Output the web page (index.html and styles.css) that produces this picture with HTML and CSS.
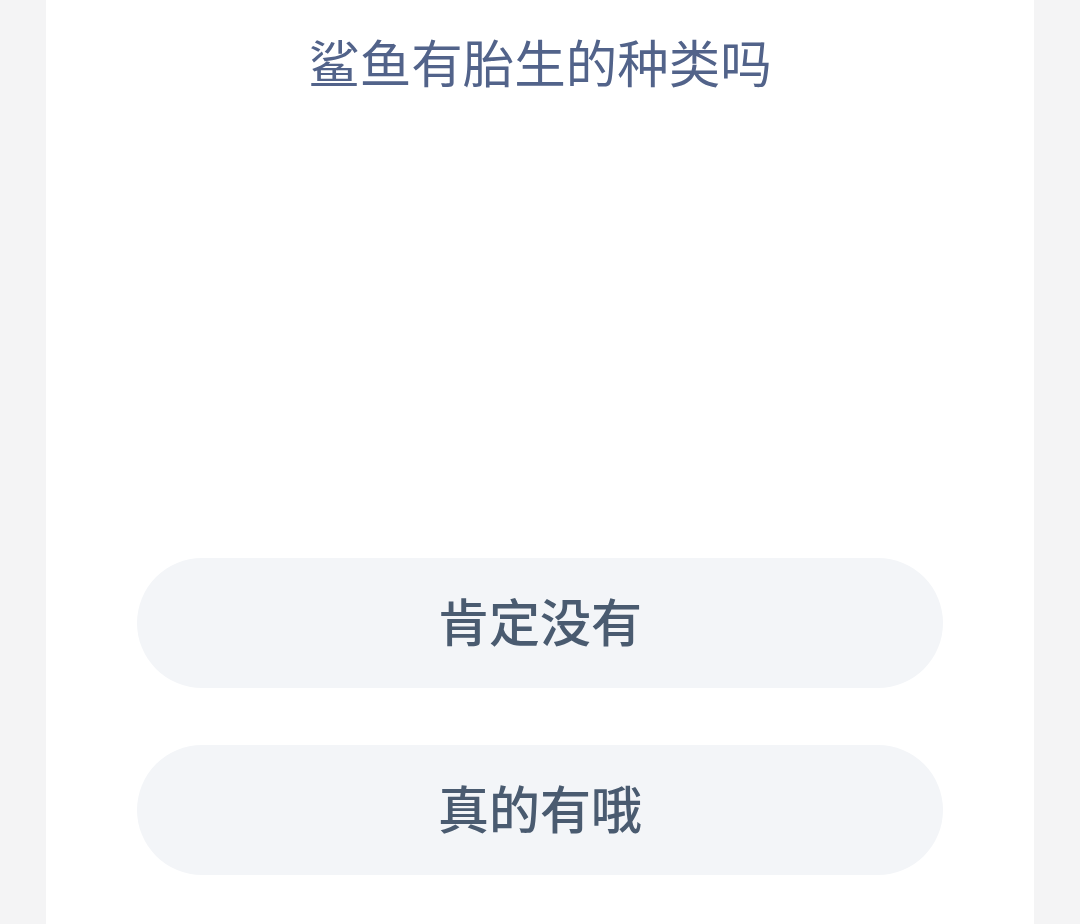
FILE: index.html
```html
<!DOCTYPE html>
<html lang="zh-CN">
<head>
    <meta charset="UTF-8">
    <meta name="viewport" content="width=device-width, initial-scale=1.0">
    <title>鲨鱼有胎生的种类吗</title>
    <link rel="stylesheet" href="styles.css">
</head>
<body>
    <div class="card">
        <h1 class="question">鲨鱼有胎生的种类吗</h1>

        <div class="options">
            <button type="button" class="option-btn">肯定没有</button>
            <button type="button" class="option-btn">真的有哦</button>
        </div>
    </div>
</body>
</html>
```

FILE: styles.css
```css
* {
    margin: 0;
    padding: 0;
    box-sizing: border-box;
}

body {
    font-family: "Noto Sans CJK SC", "Noto Sans", sans-serif;
    background: #f4f4f5;
    min-height: 100vh;
}

.card {
    background: #ffffff;
    margin: 0 46px;
    min-height: 924px;
    padding-top: 25px;
}

.question {
    text-align: center;
    font-size: 51.5px;
    line-height: 72px;
    font-weight: 400;
    color: #52638a;
}

.options {
    display: flex;
    flex-direction: column;
    gap: 57px;
    padding: 461px 91px 0;
}

.option-btn {
    height: 130px;
    padding-bottom: 7px;
    border: none;
    border-radius: 65px;
    background: #f3f5f8;
    font-family: inherit;
    font-size: 51px;
    font-weight: 500;
    color: #4a5b70;
    cursor: pointer;
}
```
